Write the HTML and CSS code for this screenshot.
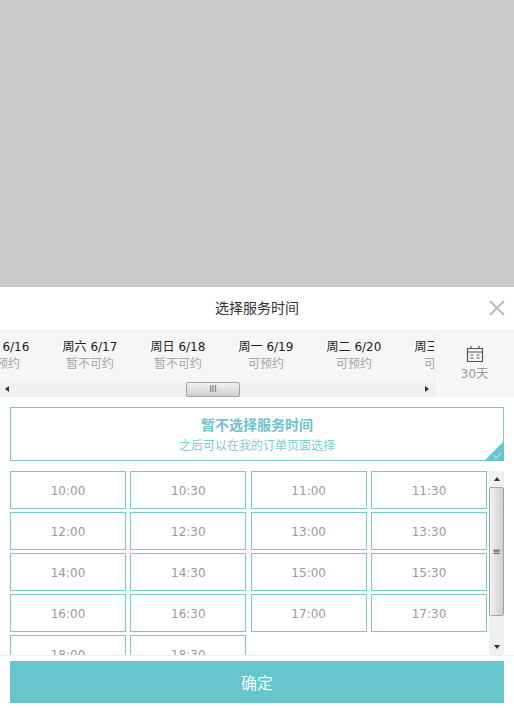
FILE: index.html
```html
<!DOCTYPE html>
<html lang="zh-CN">

<head>
    <meta charset="UTF-8">
    <meta name="viewport" content="width=device-width, initial-scale=1.0">
    <title>选择服务时间</title>
    <link rel="stylesheet" href="styles.css">
</head>

<body>
    <div class="overlay"></div>

    <div class="panel">
        <header class="panel-head">
            <h1>选择服务时间</h1>
            <svg class="close" width="16" height="16" viewBox="0 0 16 16">
                <path d="M1 1L15 15M15 1L1 15" stroke="#b8b8b8" stroke-width="1.8" fill="none" />
            </svg>
        </header>

        <!-- 日期栏 -->
        <div class="date-bar">
            <div class="date-scroll">
                <div class="date-row">
                    <div class="date-item"><b>周五 6/16</b><span>可预约</span></div>
                    <div class="date-item"><b>周六 6/17</b><span>暂不可约</span></div>
                    <div class="date-item"><b>周日 6/18</b><span>暂不可约</span></div>
                    <div class="date-item"><b>周一 6/19</b><span>可预约</span></div>
                    <div class="date-item"><b>周二 6/20</b><span>可预约</span></div>
                    <div class="date-item"><b>周三 6/21</b><span>可预约</span></div>
                </div>
                <div class="hbar">
                    <i class="arrow-left"></i>
                    <div class="hbar-track">
                        <div class="hbar-thumb">III</div>
                    </div>
                    <i class="arrow-right"></i>
                </div>
            </div>
            <div class="month">
                <svg width="18" height="18" viewBox="0 0 18 18">
                    <path d="M1.5 3.5H16.5V16.5H1.5ZM1.5 7H16.5M5 1V4M13 1V4M4.5 10H7.5M10.5 10H13.5M4.5 13H7.5M10.5 13H13.5" stroke="#555" stroke-width="1.2" fill="none" />
                </svg>
                <span>30天</span>
            </div>
        </div>

        <div class="skip">
            <strong>暂不选择服务时间</strong>
            <span>之后可以在我的订单页面选择</span>
            <svg class="skip-corner" width="20" height="20" viewBox="0 0 20 20">
                <path d="M20 0V20H0Z" fill="#66c6cc" />
                <path d="M9 14L12 17L17 12" stroke="#d8f2f3" stroke-width="1" fill="none" />
            </svg>
        </div>

        <!-- 时间列表 -->
        <div class="times">
            <div class="time-grid">
                <div class="time">10:00</div>
                <div class="time">10:30</div>
                <div class="time">11:00</div>
                <div class="time">11:30</div>
                <div class="time">12:00</div>
                <div class="time">12:30</div>
                <div class="time">13:00</div>
                <div class="time">13:30</div>
                <div class="time">14:00</div>
                <div class="time">14:30</div>
                <div class="time">15:00</div>
                <div class="time">15:30</div>
                <div class="time">16:00</div>
                <div class="time">16:30</div>
                <div class="time">17:00</div>
                <div class="time">17:30</div>
                <div class="time">18:00</div>
                <div class="time">18:30</div>
            </div>
            <div class="vbar">
                <i class="arrow-up"></i>
                <div class="vbar-track">
                    <div class="vbar-thumb">≡</div>
                </div>
                <i class="arrow-down"></i>
            </div>
        </div>

        <footer class="panel-foot">
            <button class="confirm">确定</button>
        </footer>
    </div>
</body>

</html>
```

FILE: styles.css
```css
/* 基本 */
body {
    margin: 0;
    width: 514px;
    height: 708px;
    overflow: hidden;
    background: #fff;
    font-family: "DejaVu Sans", "Noto Sans CJK SC", sans-serif;
    display: flex;
    flex-direction: column;
}

.overlay {
    height: 287px;
    background: #cbcbcb;
}

.panel {
    flex: 1;
    display: flex;
    flex-direction: column;
    background: #fff;
}

/* 标题 */
.panel-head {
    height: 43px;
    box-sizing: border-box;
    padding-bottom: 4px;
    display: flex;
    align-items: center;
    justify-content: center;
    position: relative;
}

.panel-head h1 {
    margin: 0;
    font-size: 14px;
    font-weight: normal;
    color: #333;
}

.close {
    position: absolute;
    right: 9px;
    top: 13px;
}

/* 日期栏 */
.date-bar {
    height: 67px;
    display: flex;
    background: #f6f6f6;
    border-top: 1px solid #eee;
    box-sizing: border-box;
}

.date-scroll {
    width: 434px;
    overflow: hidden;
    border-right: 1px solid #ececec;
    box-sizing: content-box;
}

.date-row {
    display: flex;
    margin-left: -42px;
    height: 50px;
}

.date-item {
    flex: 0 0 88px;
    display: flex;
    flex-direction: column;
    align-items: center;
    padding-top: 8px;
    box-sizing: border-box;
    white-space: nowrap;
}

.date-item b {
    font-size: 12px;
    font-weight: normal;
    line-height: 17px;
    color: #222;
}

.date-item span {
    font-size: 12px;
    line-height: 17px;
    color: #a6a6a6;
}

.hbar {
    height: 16px;
    display: flex;
    align-items: center;
    background: #f0f0f0;
}

.hbar-track {
    flex: 1;
    padding-left: 170px;
}

.hbar-thumb {
    width: 54px;
    height: 15px;
    box-sizing: border-box;
    border: 1px solid #a4a4a4;
    border-radius: 2px;
    background: linear-gradient(#f2f2f2, #cfcfcf);
    font-size: 8px;
    line-height: 13px;
    text-align: center;
    color: #555;
}

.arrow-left,
.arrow-right,
.arrow-up,
.arrow-down {
    display: block;
    width: 0;
    height: 0;
    border: 3px solid transparent;
}

.arrow-left {
    border-right: 4px solid #333;
    margin: 0 7px 0 2px;
}

.arrow-right {
    border-left: 4px solid #333;
    margin: 0 2px 0 7px;
}

.month {
    flex: 1;
    display: flex;
    flex-direction: column;
    align-items: center;
    padding-top: 14px;
    background: #f6f6f6;
}

.month span {
    margin-top: 3px;
    font-size: 12px;
    line-height: 17px;
    color: #9b9b9b;
}

/* 暂不选择 */
.skip {
    margin: 10px 10px 10px;
    height: 54px;
    box-sizing: border-box;
    border: 1px solid #78c9cd;
    padding-top: 7px;
    display: flex;
    flex-direction: column;
    align-items: center;
    position: relative;
}

.skip strong {
    font-size: 14px;
    line-height: 20px;
    color: #70c3c9;
}

.skip span {
    margin-top: 2px;
    font-size: 12px;
    line-height: 18px;
    color: #7ccbd0;
}

.skip-corner {
    position: absolute;
    right: -1px;
    bottom: -1px;
}

/* 时间列表 */
.times {
    height: 184px;
    overflow: hidden;
    display: flex;
    padding-left: 10px;
}

.time-grid {
    width: 479px;
    height: 225px;
    display: grid;
    grid-template-columns: repeat(4, 116px);
    grid-auto-rows: 38px;
    column-gap: 4.33px;
    row-gap: 3px;
    align-content: start;
}

.time {
    box-sizing: border-box;
    border: 1px solid #78c9cd;
    font-size: 12px;
    line-height: 38px;
    text-align: center;
    color: #9a9a9a;
}

.vbar {
    width: 15px;
    height: 184px;
    display: flex;
    flex-direction: column;
    align-items: center;
    background: #f0f0f0;
}

.vbar-track {
    flex: 1;
    width: 100%;
}

.vbar-thumb {
    height: 129px;
    box-sizing: border-box;
    border: 1px solid #a4a4a4;
    border-radius: 2px;
    background: linear-gradient(90deg, #f2f2f2, #cfcfcf);
    font-size: 10px;
    line-height: 127px;
    text-align: center;
    color: #555;
}

.arrow-up {
    border-bottom: 4px solid #333;
    margin: 3px 0 6px;
}

.arrow-down {
    border-top: 4px solid #333;
    margin: 6px 0 3px;
}

/* 底部 */
.panel-foot {
    flex: 1;
    border-top: 1px solid #eee;
    padding: 5px 10px;
}

.confirm {
    display: block;
    width: 100%;
    height: 42px;
    border: none;
    background: #66c6cc;
    color: #f2fbfb;
    font-family: inherit;
    font-size: 16px;
    padding: 0;
}
```
